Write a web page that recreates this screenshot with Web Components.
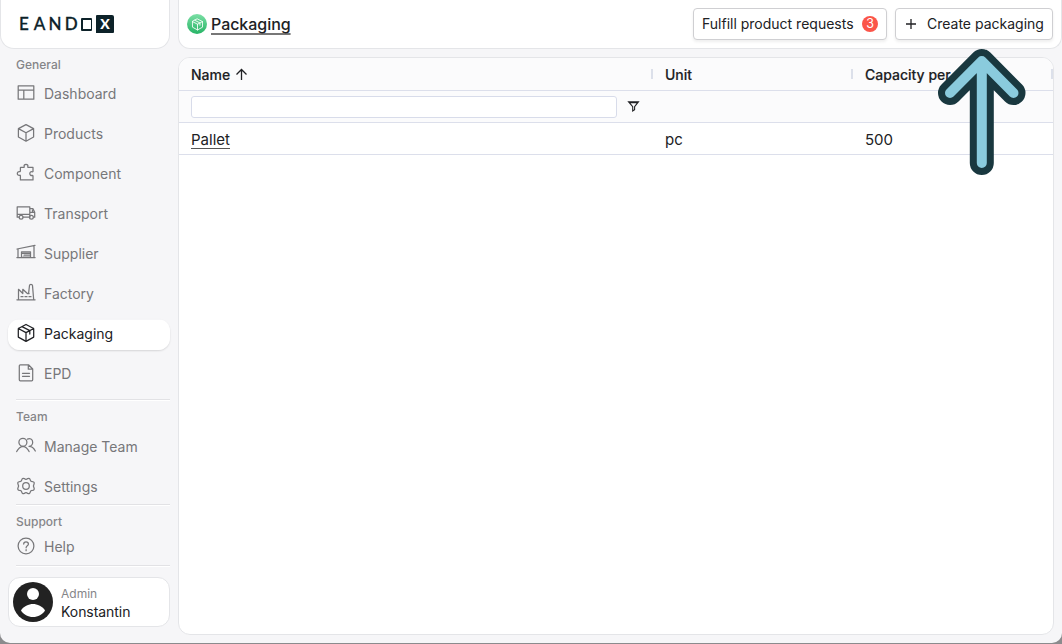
<!DOCTYPE html>
<html lang="en">
<head>
<meta charset="utf-8">
<title>Packaging</title>
<style>
html,body{margin:0;height:644px;overflow:hidden;background:#8b8b8d}
body{font-family:Inter,"Liberation Sans",sans-serif;font-size:14px;color:#202124}
</style>
</head>
<body>
<app-shell></app-shell>
<script>
const define=(name,html,init)=>customElements.define(name,class extends HTMLElement{
  connectedCallback(){
    if(this.shadowRoot)return;
    const t=document.createElement('template');
    t.innerHTML='<style>*{box-sizing:border-box}'+html;
    const root=this.attachShadow({mode:'open'});
    if(init)init.call(this,t.content);
    root.append(t.content.cloneNode(true));
  }
});
const icons={
dashboard:'<path d="M2.200 2.800h15.600v13.400H2.200zM2.200 7h15.600M7.800 7v9.200"/>',
cube:'<path d="M10 1.600l7.600 4v8.400L10 18.200 2.400 14V5.600zM2.400 5.600L10 9.800l7.600-4.200M10 9.800v8.400"/>',
puzzle:'<path d="M4.600 4.400h3.200c.3 0 .5-.4.4-.8C7.700 2.400 8.700 1.300 10 1.300s2.300 1.100 1.800 2.300c-.1.400.1.800.4.800H17v4c0 .4-.4.5-.8.4-1.300-.4-2.400.5-2.400 1.800s1.100 2.200 2.400 1.800c.4-.1.800.1.800.5v4H4.400v-4.200c0-.5-.3-.6-.7-.4C2.500 12.700 1.300 11.800 1.300 10.500s1.100-2.200 2.300-1.900c.5.1.8-.1.800-.5V4.600z"/>',
truck:'<path d="M3 14.200H1.200V3.800h12.600v10.400H7.200M13.800 5.700h3.200l1.700 3.600v4.900h-1M12.800 14.200h1M14.200 9.400h4.200M1.200 11.300h12.600M16.500 7v2.400"/><circle cx="5.100" cy="14.200" r="1.900"/><circle cx="15.400" cy="14.200" r="1.900"/>',
supplier:'<path d="M.9 14.500h18.200M2 14.500V6M18 14.500V3.200M1 6l18-3.600M5.500 14.500V8.800h9v5.700M5.500 10.400h9M8 12.200h6.500M7 14h7"/>',
factory:'<path d="M.9 16.800h18.200M2.500 16.800V6.300l4.300 4.200V6.300l4.600 4.200h1.800M12.600 10.300l.9-7.800c.1-1.500 2.800-1.500 3 0l1.200 14.300M5 13.700h2M9 13.700h2M13 13.700h2"/>',
package:'<path d="M10 1.500l7.700 4v8.600L10 18.400l-7.700-4.300V5.500zM2.300 5.500L10 9.600l7.700-4.100M10 9.600v8.800M6 3.600l7.800 4v3.500"/>',
doc:'<path d="M12.500 1.800H4.300c-.6 0-1 .4-1 1v14c0 .6.4 1 1 1h11.400c.6 0 1-.4 1-1V6zM12.300 2v4.200h4.200M6.500 10.300h7M6.500 13.300h7"/>',
team:'<circle cx="6.900" cy="6.300" r="4"/><path d="M.7 15.600c1.400-2.900 3.600-4.900 6.200-5.300 2.700.4 4.900 2.400 6.200 5.300M11.500 3.100c2.200-1.400 5.200.1 5.200 3.200 0 2.200-1.600 4-3.700 4 2.900 0 5 2 6.300 4.700"/>',
gear:'<circle cx="10" cy="10" r="3.300"/><path d="M8.300 2.600Q10 4 11.700 2.600 13.800 1.700 14.300 4.100 14.700 5.600 16.300 5.500 18.900 6 18 8.200 16.800 10 18 11.800 18.900 14 16.300 14.500 14.700 14.400 14.300 15.900 13.800 18.300 11.700 17.400 10 16 8.300 17.400 6.200 18.300 5.700 15.900 5.300 14.400 3.700 14.500 1.100 14 2 11.800 3.200 10 2 8.200 1.100 6 3.700 5.500 5.300 5.600 5.700 4.100 6.200 1.700 8.300 2.600z"/>',
help:'<circle cx="10" cy="10" r="7.900"/><path d="M7.700 8c0-3 4.700-2.900 4.700-.1 0 1.900-2.300 1.800-2.300 3.900M10.100 13.700v1"/>'
};
define('ui-icon',`:host{display:block;width:20px;height:20px;flex:none}svg{display:block;width:100%;height:100%;overflow:visible;fill:none;stroke:currentColor;stroke-width:var(--stroke,1.25);stroke-linejoin:round;stroke-linecap:round}</style><svg viewBox="0 0 20 20"></svg>`,function(r){r.querySelector('svg').innerHTML=icons[this.getAttribute('name')]||''});
define('brand-logo',`:host{display:flex;height:49px;width:170px;background:#fff;border:1px solid #e4e5e8;border-top:0;border-radius:0 0 14px 14px;padding:15px 0 0 18px;color:#0d2229}
.n{font:500 17px/18px Lato,sans-serif;letter-spacing:3.2px;width:62px;flex:none;white-space:nowrap;-webkit-text-stroke:.3px}.n span{letter-spacing:5px}.o{width:11px;height:13px;border:1.9px solid;border-width:2px 1px 2px 2px;border-radius:1px;margin:3px 4px 0 0;flex:none}.x{width:18px;height:18px;background:#0d2229;color:#fff;border-radius:1px 2px 1px 0;font:900 14px/17px Lato,sans-serif;text-align:center}</style><span class="n"><span>E</span>AND</span><i class="o"></i><span class="x">X</span>`);
define('nav-item',`:host{display:flex;align-items:center;height:32px;margin:0 0 8px 8px;padding:0 0 0 8px;gap:8px;border-radius:12px;color:#77777a}
:host([active]){background:linear-gradient(#f6f6f8 1px,#fff 1px);color:#202124;box-shadow:0 1px 2px #0002;height:31px;margin-top:1px;padding-bottom:1px}ui-icon{margin-top:-2px}span{white-space:nowrap;margin-top:-1px}</style><ui-icon></ui-icon><span><slot></slot></span>`,function(r){r.querySelector('ui-icon').setAttribute('name',this.getAttribute('icon'))});
define('nav-label',`:host{display:block;margin-left:16px;font:500 12px/18px Inter,sans-serif;color:#858588}</style><slot></slot>`);
define('nav-divider',`:host{display:block;height:2px;margin-left:16px;border-top:1px solid #e2e2e5;background:#fff}</style>`);
define('user-card',`:host{display:flex;align-items:center;width:162px;height:50px;margin-left:8px;border:1px solid #e4e5e8;border-radius:12px;background:#fff;padding-left:4px;gap:8px}svg{width:40px;height:40px}.a{font-size:12px;line-height:17px;color:#858588}.b{line-height:19px;letter-spacing:-.05px}.w{padding-top:2px}</style>
<svg viewBox="0 0 40 40"><circle cx="20" cy="20" r="20" fill="#222"/><circle cx="20" cy="12" r="6" fill="#fff"/><path d="M8 28.5c2-4 8-6.500 12-6.500s10 2.500 12 6.500c-2.500 4-7 6.500-12 6.500S10.500 32.500 8 28.500z" fill="#fff"/></svg><div class="w"><div class="a">Admin</div><div class="b">Konstantin</div></div>`);
define('side-nav',`:host{display:flex;flex-direction:column;width:170px}nav-label:first-of-type{margin-top:7px;margin-bottom:4px}</style>
<brand-logo></brand-logo><nav-label>General</nav-label>
<nav-item icon="dashboard">Dashboard</nav-item><nav-item icon="cube">Products</nav-item><nav-item icon="puzzle">Component</nav-item><nav-item icon="truck">Transport</nav-item><nav-item icon="supplier">Supplier</nav-item><nav-item icon="factory">Factory</nav-item><nav-item icon="package" active>Packaging</nav-item><nav-item icon="doc">EPD</nav-item>
<nav-divider style="margin-top:1px"></nav-divider><nav-label style="margin:7px 0 5px 16px">Team</nav-label><nav-item icon="team">Manage Team</nav-item><nav-item icon="gear" style="margin-bottom:1px">Settings</nav-item>
<nav-divider></nav-divider><nav-label style="margin:7px 0 0 16px">Support</nav-label><nav-item icon="help" style="margin-bottom:2px">Help</nav-item><nav-divider></nav-divider><user-card style="margin-top:10px"></user-card>`);
define('ui-button',`:host{display:flex;align-items:center;height:32px;border:1px solid #cfcfd2;border-radius:4px;background:#fff;padding:0 8px 1px;box-shadow:0 2px 3px #0001;white-space:nowrap}</style><slot></slot>`);
define('page-header',`:host{display:flex;height:49px;border:1px solid #e4e5e8;border-top:0;border-radius:0 0 12px 12px;background:#fff;padding:8px 8px 0 8px;gap:8px}
.t{display:flex;align-items:center;height:32px;gap:4px;flex:1;font-weight:500;font-size:16px}.i{width:20px;height:20px;border-radius:50%;background:linear-gradient(#7bdfa5,#27b466);color:#fff;display:grid;place-items:center}.i ui-icon{width:13px;height:13px;--stroke:1.3}.t span{letter-spacing:-.05px;text-decoration:underline;text-decoration-color:#777;text-underline-offset:3px;text-decoration-thickness:1.5px}
b{width:16px;height:16px;border-radius:50%;background:#fb5549;color:#fff;font-weight:400;font-size:12.5px;line-height:16px;text-align:center;margin-left:auto}svg{width:12px;height:12px;flex:none;margin:0 10px 0 1px;stroke:#202124;stroke-width:1.3}.f{width:194px}.c{width:158px}</style>
<div class="t"><div class="i"><ui-icon name="package"></ui-icon></div><span>Packaging</span></div><ui-button class="f">Fulfill product requests<b>3</b></ui-button><ui-button class="c"><svg viewBox="0 0 12 12"><path d="M6 1v10M1 6h10"/></svg>Create packaging</ui-button>`);
define('data-grid',`:host{display:block;width:876px;height:578px;border:1px solid #e4e5e8;border-radius:12px;background:#fff;overflow:hidden}
.r{display:grid;grid-template-columns:474px 200px 200px;height:32px;border-bottom:1px solid #dcdfeb;align-items:center}.r>div{padding-left:12px;white-space:nowrap;overflow:hidden}.h{height:33px;background:#fbfbfc;font-weight:500;-webkit-text-stroke:.15px}.h>div{display:flex;align-items:center;height:100%;gap:5px}.h>div::after{content:"";width:2px;height:10px;background:#dce0ea;margin-left:auto;flex:none}.f{background:#fbfbfc}.f>div{display:flex;align-items:center;gap:10px}.in{width:426px;height:22px;background:#fff;border:1px solid #d8dcea;border-radius:3px}svg{width:13px;height:13px;fill:none;stroke:#202124;stroke-width:1.3}.f svg{stroke-width:1.1}.d{font-size:15px}.d>div{padding-top:2px}u{text-decoration:none;border-bottom:1px solid #555;line-height:17px;display:inline-block}</style>
<div class="r h"><div>Name <svg viewBox="0 0 13 13"><path d="M6.5 12V2M1.500 6.500L6.500 1.500l5 5"/></svg></div><div>Unit</div><div>Capacity per</div></div>
<div class="r f"><div><span class="in"></span><svg viewBox="0 0 13 13"><path d="M1.5 1.700h10L7.600 6.700v3L5.700 11V6.700zM2 2.800h9"/></svg></div><div></div><div></div></div>
<div class="r d"><div><u>Pallet</u></div><div>pc</div><div>500</div></div>`);
define('pointer-arrow',`:host{position:absolute;left:936px;top:47px;width:92px;height:130px}svg{display:block;fill:none;stroke-linecap:round;stroke-linejoin:round}</style><svg width="92" height="130" viewBox="936 47 92 130"><path d="M981.8 163V61M950 93l31.800-32L1013.500 93" stroke="#19383f" stroke-width="24"/><path d="M981.8 163V61M950 93l31.800-32L1013.500 93" stroke="#8acbdd" stroke-width="10"/></svg>`);
define('app-shell',`:host{display:flex;position:relative;width:1062px;height:643px;background:#f6f6f8;border-radius:0 0 10px 10px;gap:8px;overflow:hidden}main{flex:1;display:flex;flex-direction:column;gap:8px}</style><side-nav></side-nav><main><page-header></page-header><data-grid></data-grid></main><pointer-arrow></pointer-arrow>`);
</script>
</body>
</html>
